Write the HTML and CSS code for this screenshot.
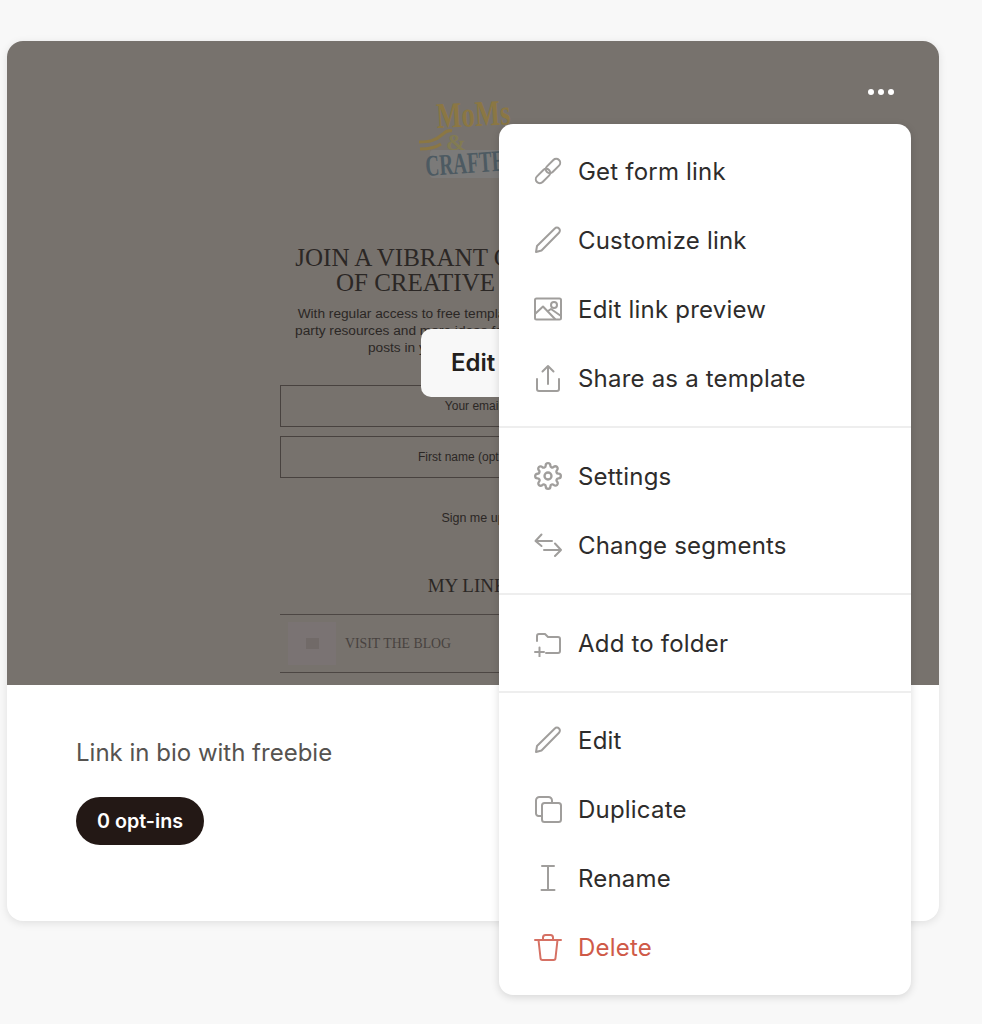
FILE: index.html
```html
<!DOCTYPE html>
<html lang="en">
<head>
    <meta charset="UTF-8">
    <meta name="viewport" content="width=device-width, initial-scale=1.0">
    <title>Link in bio with freebie</title>
    <link rel="stylesheet" href="styles.css">
</head>
<body>
    <main class="card">
        <div class="preview">
            <svg class="logo" width="150" height="90" viewBox="0 0 150 90">
                <rect class="logo-patch" x="12" y="50" width="90" height="28" rx="3"/>
                <path class="logo-swash" d="M1 42c10 0 16-1 24-8 3-3 6-4 9-3M2 49c9 0 15-1 21-5"/>
                <text x="19" y="28" textLength="74" lengthAdjust="spacingAndGlyphs" class="logo-moms" transform="rotate(-3 19 28)">MoMs</text>
                <text x="28" y="50" class="logo-and">&amp;</text>
                <text x="8" y="76" textLength="104" lengthAdjust="spacingAndGlyphs" class="logo-crafters" transform="rotate(-4 8 76)">CRAFTERS</text>
            </svg>
            <h3 class="form-title">JOIN A VIBRANT COMMUNITY<br>OF CREATIVE PARENTS</h3>
            <p class="form-copy">With regular access to free templates, printables, crafts, &amp;<br>party resources and more ideas for your next party, plus all<br>posts in your inbox every weekend</p>
            <div class="field">Your email</div>
            <div class="field field-second">First name (optional)</div>
            <div class="signup">Sign me up</div>
            <h4 class="links-title">MY LINKS</h4>
            <div class="link-row">
                <span class="thumb"><span class="thumb-dot"></span></span>
                <span>VISIT THE BLOG</span>
            </div>
            <a href="#" class="edit-button">Edit</a>
            <div class="dots"><span></span><span></span><span></span></div>
        </div>
        <div class="card-info">
            <div class="card-title">Link in bio with freebie</div>
            <span class="pill">0 opt-ins</span>
        </div>

        <div class="menu">
            <div class="menu-section">
                <a href="#" class="menu-item">
                    <svg class="icon" viewBox="0 0 28 28"><rect x="10.500" y="5" width="17" height="8" rx="4" transform="rotate(-45 19 9)"/><rect x="0.500" y="15" width="17" height="8" rx="4" transform="rotate(-45 9 19)"/></svg>
                    Get form link
                </a>
                <a href="#" class="menu-item">
                    <svg class="icon" viewBox="0 0 28 28"><path d="M2 26l1-6L20.800 2.500a2.900 2.900 0 0 1 4.200 0 2.900 2.900 0 0 1 0 4.200L7.500 24.500z"/></svg>
                    Customize link
                </a>
                <a href="#" class="menu-item">
                    <svg class="icon" viewBox="0 0 28 28"><rect x="1" y="3.500" width="26" height="21" rx="1.500"/><path d="M1 19l8-7.500 12 12.500"/><path d="M14 16l3-2 10 7"/><circle cx="20" cy="10" r="3"/></svg>
                    Edit link preview
                </a>
                <a href="#" class="menu-item">
                    <svg class="icon" viewBox="0 0 28 28"><path d="M3 15v10a2 2 0 0 0 2 2h18a2 2 0 0 0 2-2V15"/><path d="M14 20V2M8.500 7.500L14 2l5.500 5.500"/></svg>
                    Share as a template
                </a>
            </div>
            <div class="menu-section">
                <a href="#" class="menu-item">
                    <svg class="icon" viewBox="0 0 24 24"><circle cx="12" cy="12" r="3"/><path d="M19.400 15a1.650 1.650 0 0 0 .33 1.820l.06.06a2 2 0 0 1 0 2.830 2 2 0 0 1-2.830 0l-.06-.06a1.650 1.650 0 0 0-1.820-.33 1.650 1.650 0 0 0-1 1.510V21a2 2 0 0 1-2 2 2 2 0 0 1-2-2v-.09A1.650 1.650 0 0 0 9 19.400a1.650 1.650 0 0 0-1.820.33l-.06.06a2 2 0 0 1-2.830 0 2 2 0 0 1 0-2.830l.06-.06a1.650 1.650 0 0 0 .33-1.820 1.650 1.650 0 0 0-1.510-1H3a2 2 0 0 1-2-2 2 2 0 0 1 2-2h.09A1.650 1.650 0 0 0 4.600 9a1.650 1.650 0 0 0-.33-1.820l-.06-.06a2 2 0 0 1 0-2.830 2 2 0 0 1 2.830 0l.06.06a1.650 1.650 0 0 0 1.820.33H9a1.650 1.650 0 0 0 1-1.510V3a2 2 0 0 1 2-2 2 2 0 0 1 2 2v.09a1.650 1.650 0 0 0 1 1.510 1.650 1.650 0 0 0 1.820-.33l.06-.06a2 2 0 0 1 2.830 0 2 2 0 0 1 0 2.830l-.06.06a1.650 1.650 0 0 0-.33 1.820V9a1.650 1.650 0 0 0 1.510 1H21a2 2 0 0 1 2 2 2 2 0 0 1-2 2h-.09a1.650 1.650 0 0 0-1.510 1z"/></svg>
                    Settings
                </a>
                <a href="#" class="menu-item">
                    <svg class="icon" viewBox="0 0 28 28"><path d="M18 10H2M7.500 3.500L1.500 10l6 5"/><path d="M10 19h17M21 12.500l6 6.500-6 6"/></svg>
                    Change segments
                </a>
            </div>
            <div class="menu-section">
                <a href="#" class="menu-item">
                    <svg class="icon" viewBox="0 0 28 28"><path d="M3 12V7a2 2 0 0 1 2-2h6l3 3h10a2 2 0 0 1 2 2v12a2 2 0 0 1-2 2H12"/><path d="M1 23h9M5.500 18.500v9"/></svg>
                    Add to folder
                </a>
            </div>
            <div class="menu-section">
                <a href="#" class="menu-item">
                    <svg class="icon" viewBox="0 0 28 28"><path d="M2 26l1-6L20.800 2.500a2.900 2.900 0 0 1 4.200 0 2.900 2.900 0 0 1 0 4.200L7.500 24.500z"/></svg>
                    Edit
                </a>
                <a href="#" class="menu-item">
                    <svg class="icon" viewBox="0 0 28 28"><rect x="8" y="8" width="19" height="19" rx="2.500"/><path d="M8 21H4.500A2.500 2.500 0 0 1 2 18.500v-13A3.500 3.500 0 0 1 5.500 2h9A3.500 3.500 0 0 1 18 5.500V8"/></svg>
                    Duplicate
                </a>
                <a href="#" class="menu-item">
                    <svg class="icon" viewBox="0 0 28 28"><path d="M8 2h12M14 2v24M7.500 26h13"/></svg>
                    Rename
                </a>
                <a href="#" class="menu-item menu-item-danger">
                    <svg class="icon" viewBox="0 0 28 28"><path d="M1 7h26M9 7V4.500A2.500 2.500 0 0 1 11.500 2h5A2.500 2.500 0 0 1 19 4.500V7"/><path d="M4.500 7l2 18a2 2 0 0 0 2 2h11a2 2 0 0 0 2-2l2-18"/></svg>
                    Delete
                </a>
            </div>
        </div>
    </main>
</body>
</html>
```

FILE: styles.css
```css
body {
    font-family: Inter, "Liberation Sans", sans-serif;
    margin: 0;
    padding: 41px 43px 103px 7px;
    background-color: #f8f8f8;
    color: #2e2c2b;
}
a {
    text-decoration: none;
    color: inherit;
}
.card {
    position: relative;
    height: 880px;
    background: white;
    border-radius: 16px;
    box-shadow: 0 2px 8px rgba(0, 0, 0, 0.1);
}

/* Dimmed form preview */
.preview {
    position: relative;
    height: 644px;
    overflow: hidden;
    display: flex;
    flex-direction: column;
    align-items: center;
    background-color: #77726d;
    border-radius: 16px 16px 0 0;
    color: #2b2725;
    font-family: "Liberation Sans", Arial, sans-serif;
    font-size: 12px;
}
.logo {
    margin-top: 59px;
    margin-left: 40px;
    flex: none;
}
.logo text {
    font-family: "Liberation Serif", serif;
    font-weight: bold;
}
.logo-patch {
    fill: #7b7a79;
}
.logo-moms {
    font-size: 36px;
    fill: #8b7743;
}
.logo-and {
    font-size: 24px;
    fill: #827b52;
}
.logo-swash {
    fill: none;
    stroke: #8b7743;
    stroke-width: 3;
}
.logo-crafters {
    font-size: 30px;
    fill: #4d5a62;
}
.form-title {
    margin: 55px 0 0;
    font-family: "Liberation Serif", serif;
    font-weight: normal;
    font-size: 25px;
    line-height: 25px;
    text-align: center;
    white-space: nowrap;
}
.form-copy {
    margin: 10px 0 0;
    font-size: 13.7px;
    line-height: 17px;
    text-align: center;
    white-space: nowrap;
}
.field {
    display: flex;
    align-items: center;
    justify-content: center;
    flex: none;
    box-sizing: border-box;
    width: 386px;
    height: 42px;
    margin-top: 29px;
    border: 1px solid #48423f;
}
.field-second {
    margin-top: 9px;
}
.signup {
    margin-top: 33px;
    line-height: 14px;
    font-size: 12.5px;
}
.links-title {
    margin: 49px 0 0;
    font-family: "Liberation Serif", serif;
    font-weight: normal;
    font-size: 19px;
    line-height: 24px;
}
.link-row {
    display: flex;
    align-items: center;
    gap: 9px;
    flex: none;
    box-sizing: border-box;
    width: 386px;
    height: 59px;
    margin-top: 16px;
    padding-left: 8px;
    border-top: 1px solid #4c4643;
    border-bottom: 1px solid #4c4643;
    font-family: "Liberation Serif", serif;
    font-size: 13.8px;
    color: #48423f;
}
.thumb {
    display: flex;
    align-items: center;
    justify-content: center;
    width: 48px;
    height: 43px;
    background-color: #7a7373;
}
.thumb-dot {
    width: 13px;
    height: 11px;
    background-color: #716a68;
}
.edit-button {
    position: absolute;
    top: 288px;
    left: 414px;
    box-sizing: border-box;
    width: 104px;
    height: 68px;
    padding-left: 30px;
    line-height: 68px;
    background-color: #f8f8f8;
    border-radius: 10px;
    font-family: Inter, "Liberation Sans", sans-serif;
    font-size: 24px;
    font-weight: 600;
    color: #231f1d;
}
.dots {
    position: absolute;
    top: 48px;
    left: 861px;
    display: flex;
    gap: 4px;
}
.dots span {
    width: 6px;
    height: 6px;
    background-color: white;
    border-radius: 50%;
}

/* Info under the preview */
.card-info {
    padding: 54px 69px;
}
.card-title {
    font-size: 24px;
    line-height: 28px;
    color: #565350;
}
.pill {
    display: inline-block;
    margin-top: 30px;
    padding: 0 21px;
    line-height: 48px;
    background-color: #231815;
    border-radius: 24px;
    color: white;
    font-size: 19.7px;
    font-weight: 600;
}

/* Dropdown menu */
.menu {
    position: absolute;
    top: 83px;
    left: 492px;
    width: 412px;
    background: white;
    border-radius: 14px;
    box-shadow: 0 2px 8px rgba(0, 0, 0, 0.14);
}
.menu-section {
    padding: 14px 0 13px;
    border-bottom: 2px solid #eeeeee;
}
.menu-section:first-child {
    padding-top: 13px;
}
.menu-section:last-child {
    padding-top: 13px;
    border-bottom: none;
}
.menu-item {
    display: flex;
    align-items: center;
    gap: 16px;
    box-sizing: border-box;
    height: 69px;
    padding: 0 0 1px 35px;
    font-size: 24px;
    letter-spacing: 0.2px;
}
.menu-item-danger {
    color: #cf5a48;
}
.icon {
    width: 28px;
    height: 28px;
    flex: none;
    fill: none;
    stroke: #a09e9c;
    stroke-width: 2;
    stroke-linecap: round;
    stroke-linejoin: round;
}
.menu-item-danger .icon {
    stroke: #d67164;
}
```
